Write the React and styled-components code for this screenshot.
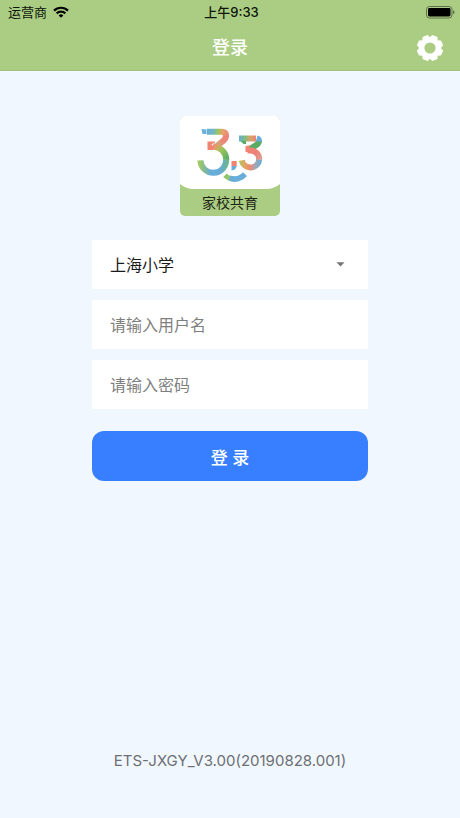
import React, { useState } from 'react';
import styled, { createGlobalStyle } from 'styled-components';

const GlobalStyle = createGlobalStyle`
  * {
    box-sizing: border-box;
  }

  body {
    margin: 0;
    background-color: #f1f7fe;
  }

  body, input, select, button {
    font-family: Inter, "Noto Sans CJK SC", sans-serif;
  }
`

const Page = styled.div`
  min-height: 100vh;
  display: flex;
  flex-direction: column;
  background-color: #f1f7fe;
`

const Header = styled.header`
  background-color: #aacd83;
  box-shadow: inset 0 -1px 0 #a3c183;
`

const StatusBar = styled.div`
  display: grid;
  grid-template-columns: 1fr auto 1fr;
  align-items: center;
  height: 24px;
  padding: 0 5px 0 8px;
  font-size: 13px;
  line-height: 24px;
  color: #10150b;
`

const Carrier = styled.span`
  display: flex;
  align-items: center;
  gap: 6px;
`

const Clock = styled.time`
  font-weight: 500;
`

const BatteryIcon = styled.svg`
  justify-self: end;
`

const NavBar = styled.div`
  display: grid;
  grid-template-columns: 1fr auto 1fr;
  align-items: center;
  height: 47px;
  padding: 0 16px;
`

const Title = styled.h1`
  grid-column: 2;
  margin: 0;
  font-size: 18px;
  font-weight: 500;
  line-height: 25px;
  color: #fff;
`

const SettingsButton = styled.button`
  justify-self: end;
  display: flex;
  padding: 0;
  border: none;
  background: none;
  cursor: pointer;
`

const Main = styled.main`
  flex: 1;
  display: flex;
  flex-direction: column;
  align-items: center;
  padding: 45px 20% 0;
`

const Logo = styled.div`
  display: flex;
  flex-direction: column;
  width: 100px;
  border-radius: 5px;
  overflow: hidden;
  background-color: #aacd83;
`

const LogoArt = styled.svg`
  display: block;
`

const LogoName = styled.span`
  text-align: center;
  font-size: 14px;
  line-height: 27px;
  color: #1d2416;
`

const Form = styled.form`
  width: 100%;
  display: flex;
  flex-direction: column;
  gap: 11px;
  margin-top: 24px;
`

const SelectBox = styled.div`
  display: grid;
  align-items: center;
  background-color: #fff;

  > * {
    grid-area: 1 / 1;
  }
`

const Select = styled.select`
  width: 100%;
  height: 49px;
  padding: 0 18px;
  border: none;
  border-radius: 0;
  appearance: none;
  background: none;
  font-size: 16px;
  color: #1a1a1a;
`

const Arrow = styled.svg`
  justify-self: end;
  margin-right: 23px;
  pointer-events: none;
`

const Input = styled.input`
  width: 100%;
  height: 49px;
  padding: 0 18px;
  border: none;
  background-color: #fff;
  font-size: 16px;
  color: #1a1a1a;

  &::placeholder {
    color: #7f7f7f;
    opacity: 1;
  }
`

const LoginButton = styled.button`
  height: 50px;
  margin-top: 11px;
  border: none;
  border-radius: 12px;
  background-color: #387fff;
  font-size: 17px;
  font-weight: 500;
  color: #fff;
  cursor: pointer;
`

const Version = styled.footer`
  padding: 0 0 45px;
  text-align: center;
  font-size: 15px;
  line-height: 24px;
  color: #6c6f73;
`

function Wifi() {
  return (
    <svg width="16" height="12" viewBox="0 0 16 12" fill="none" stroke="#000" strokeWidth="2.2" aria-hidden="true">
      <path d="M1 4.6A10 10 0 0 1 15 4.6" />
      <path d="M3.7 7.4A6.2 6.2 0 0 1 12.3 7.4" />
      <path d="M8 11.8L5.7 9.4A3.3 3.3 0 0 1 10.3 9.4Z" fill="#000" stroke="none" />
    </svg>
  )
}

function Battery() {
  return (
    <BatteryIcon width="29" height="13" viewBox="0 0 29 13" aria-hidden="true">
      <rect x="0.5" y="0.5" width="25.5" height="11.5" rx="3" fill="none" stroke="#5e7348" />
      <rect x="2" y="2" width="22.5" height="8.5" rx="1.4" fill="#000" />
      <path d="M27.2 4.2C28.9 4.8 28.9 7.7 27.2 8.3Z" fill="#4e603c" />
    </BatteryIcon>
  )
}

function Gear() {
  const teeth = [0, 45, 90, 135, 180, 225, 270, 315];

  return (
    <svg width="28" height="28" viewBox="-14 -14 28 28" aria-hidden="true">
      <circle r="8.3" fill="none" stroke="#fff" strokeWidth="5.4" />
      {teeth.map((angle) => (
        <path
          key={angle}
          d="M-4.2 -10L-2.9 -12.6Q-2.6 -13.1 -2 -13.1H2Q2.6 -13.1 2.9 -12.6L4.2 -10Z"
          fill="#fff"
          transform={`rotate(${angle + 22.5})`}
        />
      ))}
    </svg>
  )
}

function Gradient({ id, from, to, stops }) {
  return (
    <linearGradient id={id} gradientUnits="userSpaceOnUse" x1={from[0]} y1={from[1]} x2={to[0]} y2={to[1]}>
      {stops.map(([offset, color]) => (
        <stop key={offset} offset={offset} stopColor={color} />
      ))}
    </linearGradient>
  )
}

function LogoMark() {
  return (
    <LogoArt width="100" height="73" viewBox="0 0 100 73" fill="none" aria-hidden="true">
      <defs>
        <Gradient id="bigBar" from={[27, 15]} to={[49, 18]} stops={[[0, '#66add9'], [0.3, '#72b8c2'], [0.5, '#9dc45c'], [0.7, '#e8a368'], [1, '#ec8279']]} />
        <Gradient id="bigSlope" from={[47, 20]} to={[36, 30]} stops={[[0, '#ec8279'], [0.5, '#e98b78'], [0.75, '#d8a17b'], [1, '#8fc07a']]} />
        <Gradient id="bigTurn" from={[30, 28]} to={[47, 45]} stops={[[0, '#f08372'], [0.25, '#e79b6b'], [0.5, '#9cc65b'], [1, '#55aa66']]} />
        <Gradient id="bigBowl" from={[18, 46]} to={[49, 46]} stops={[[0, '#a8ca58'], [0.2, '#83bd8f'], [0.4, '#66add9'], [0.7, '#66add9'], [1, '#6fb684']]} />
        <Gradient id="smallBar" from={[59, 22]} to={[76, 22]} stops={[[0, '#66add9'], [0.35, '#7fbc7d'], [0.65, '#d6a764'], [1, '#ec8279']]} />
        <Gradient id="smallTurn" from={[67, 33]} to={[81, 42]} stops={[[0, '#f08372'], [0.6, '#ee8177'], [1, '#dc9d93']]} />
        <Gradient id="smallBowl" from={[59, 45]} to={[82, 45]} stops={[[0, '#a8c957'], [0.25, '#e5a366'], [0.5, '#ec8a76'], [0.7, '#a3a7b4'], [1, '#66add9']]} />
      </defs>
      <path d="M0 0H100V68Q94 73 86 73H14Q6 73 0 68Z" fill="#fff" />

      <path d="M21.5 13L26.5 13.5V18H22.5Z" fill="#69afd9" />
      <g strokeWidth="6">
        <path d="M27 15.8H41.5Q46 15.8 46 20" stroke="url(#bigBar)" />
        <path d="M46 19.6Q46 22.5 43.5 24.6L37 29.8" stroke="url(#bigSlope)" />
        <path d="M20.4 44.4A12.9 12.9 0 0 0 46.2 43.4" stroke="url(#bigBowl)" />
        <path d="M31 30.7H33.4A12.8 12.8 0 0 1 46.2 43.8" stroke="url(#bigTurn)" />
      </g>
      <path d="M27.5 25.5H35L33 34H27.5Z" fill="#f08372" />
      <path d="M31.5 28.5L34.5 26.5L32.5 30Z" fill="#fff" />

      <g strokeWidth="6">
        <path d="M59 22.6H76" stroke="url(#smallBar)" />
        <path d="M79 24.5Q79 27 77 28.6L70 33" stroke="#59aa62" />
        <path d="M61.8 44.4A8.8 8.8 0 0 0 79.2 43.2" stroke="url(#smallBowl)" />
        <path d="M67.5 34.4H70.4A8.8 8.8 0 0 1 79.2 43.6" stroke="url(#smallTurn)" />
      </g>
      <path d="M75.8 25.6L77.5 19.6Q82 20.5 82 25.6Z" fill="#69afd9" />
      <path d="M60.5 25H66V28H63.5Z" fill="#59aa62" />
      <path d="M65.5 30L70 29.5L69 36H65.5Z" fill="#f08372" />

      <path d="M51.5 45H56.7V50H51.5Z" fill="#f08372" />
      <path d="M51.5 50H56.7Q56 54 51.5 54.5Z" fill="#69aedb" />
      <path d="M45 59.2Q49 63 55 63.2" stroke="#93c66b" strokeWidth="5" />
      <path d="M49.5 62.2Q58.5 65.2 65 58.2" stroke="#69aedb" strokeWidth="5.6" />
    </LogoArt>
  )
}

export default function App() {
  const [school, setSchool] = useState('上海小学');
  const [username, setUsername] = useState('');
  const [password, setPassword] = useState('');

  return (
    <Page lang="zh-CN">
      <GlobalStyle />
      <Header>
        <StatusBar>
          <Carrier>运营商 <Wifi /></Carrier>
          <Clock>上午9:33</Clock>
          <Battery />
        </StatusBar>
        <NavBar>
          <Title>登录</Title>
          <SettingsButton type="button" aria-label="设置">
            <Gear />
          </SettingsButton>
        </NavBar>
      </Header>
      <Main>
        <Logo>
          <LogoMark />
          <LogoName>家校共育</LogoName>
        </Logo>
        <Form onSubmit={(e) => e.preventDefault()}>
          <SelectBox>
            <Select aria-label="学校" value={school} onChange={(e) => setSchool(e.target.value)}>
              <option>上海小学</option>
            </Select>
            <Arrow width="9" height="5" viewBox="0 0 9 5" aria-hidden="true">
              <path d="M0.5 0.3H8.5L4.5 4.6Z" fill="#757575" />
            </Arrow>
          </SelectBox>
          <Input
            aria-label="用户名"
            placeholder="请输入用户名"
            value={username}
            onChange={(e) => setUsername(e.target.value)}
          />
          <Input
            type="password"
            aria-label="密码"
            placeholder="请输入密码"
            value={password}
            onChange={(e) => setPassword(e.target.value)}
          />
          <LoginButton type="submit">登 录</LoginButton>
        </Form>
      </Main>
      <Version>ETS-JXGY_V3.00(20190828.001)</Version>
    </Page>
  )
}
